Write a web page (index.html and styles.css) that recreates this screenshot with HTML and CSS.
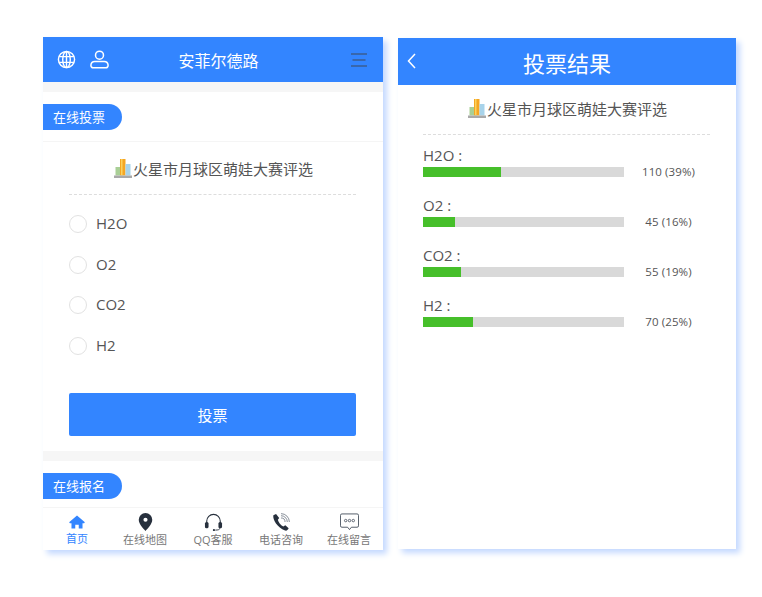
FILE: index.html
```html
<!DOCTYPE html>
<html lang="zh-CN">
<head>
    <meta charset="UTF-8">
    <meta name="viewport" content="width=device-width, initial-scale=1.0">
    <title>在线投票</title>
    <link rel="stylesheet" href="styles.css">
</head>
<body>
    <svg class="svg-defs" width="0" height="0">
        <symbol id="chart" viewBox="0 0 18 19">
            <rect x="1.5" y="8" width="5" height="8.5" fill="#a9cf96"/>
            <rect x="6" y="0" width="5.5" height="16.5" fill="#f5a623"/>
            <rect x="7" y="0" width="1.5" height="16.5" fill="#fbd25e"/>
            <rect x="11.5" y="5" width="5" height="11.5" fill="#a8d3ea"/>
            <rect x="0" y="16.5" width="18" height="2.5" fill="#a9a9a9"/>
        </symbol>
    </svg>

    <div class="phone phone-vote">
        <header class="top-bar">
            <svg class="icon-globe" viewBox="0 0 20 20" width="19" height="19" fill="none" stroke="#fff" stroke-width="1.5">
                <circle cx="10" cy="10" r="8.5"/>
                <ellipse cx="10" cy="10" rx="4" ry="8.5"/>
                <path d="M10 1.500v17M2.200 7h15.600M2.200 13h15.600"/>
            </svg>
            <svg class="icon-user" viewBox="0 0 20 20" width="19" height="19" fill="none" stroke="#fff" stroke-width="1.6">
                <circle cx="10" cy="5.500" r="4.200"/>
                <path d="M5 12h10a4 4 0 0 1 4 3.500v1a2.200 2.200 0 0 1-2.200 2.200H3.200A2.200 2.200 0 0 1 1 16.500v-1A4 4 0 0 1 5 12z"/>
            </svg>
            <h1 class="site-name">安菲尔德路</h1>
            <svg class="icon-menu" viewBox="0 0 16 14" width="16" height="14" fill="none" stroke="#3f4a5c" stroke-width="1.100">
                <path d="M0 1h16M1.500 7h13M0 13h16"/>
            </svg>
        </header>

        <div class="band"></div>
        <div class="section-head"><span class="pill">在线投票</span></div>

        <section class="vote-form">
            <div class="poll-title"><svg class="chart-icon"><use href="#chart"/></svg>火星市月球区萌娃大赛评选</div>
            <ul class="options">
                <li><span class="radio"></span><span class="option-label">H2O</span></li>
                <li><span class="radio"></span><span class="option-label">O2</span></li>
                <li><span class="radio"></span><span class="option-label">CO2</span></li>
                <li><span class="radio"></span><span class="option-label">H2</span></li>
            </ul>
            <button class="vote-button">投票</button>
        </section>

        <div class="band"></div>
        <div class="section-head section-head-last"><span class="pill">在线报名</span></div>

        <nav class="tab-bar">
            <a class="tab tab-active">
                <span class="tab-icon">
                    <svg viewBox="0 0 18 16" width="16" height="14" fill="#3385ff">
                        <path d="M9 .5 18 8.400l-.9 1H15.300V15.500h-4.300v-4.500H7v4.500H2.700V9.400H.9l-.9-1z"/>
                    </svg>
                </span>
                首页
            </a>
            <a class="tab">
                <span class="tab-icon">
                    <svg viewBox="0 0 16 20" width="15" height="18">
                        <path fill="#27303d" fill-rule="evenodd" d="M8 0a7.500 7.500 0 0 1 7.500 7.500C15.500 12.500 10 17.500 8 20 6 17.500.5 12.500.5 7.500A7.500 7.500 0 0 1 8 0zm0 5.200a2.300 2.300 0 1 0 0 4.600 2.300 2.300 0 0 0 0-4.600z"/>
                    </svg>
                </span>
                在线地图
            </a>
            <a class="tab">
                <span class="tab-icon">
                    <svg viewBox="0 0 20 20" width="19" height="18" fill="none">
                        <path d="M2.500 11V9a7.500 7.500 0 0 1 15 0v2" stroke="#27303d" stroke-width="1.200"/>
                        <rect x=".5" y="10" width="4" height="7" rx="1.800" fill="#27303d"/>
                        <rect x="15.500" y="10" width="4" height="7" rx="1.800" fill="#27303d"/>
                        <path d="M17 17c0 1.500-2 2-5 2" stroke="#27303d"/>
                        <circle cx="10.500" cy="19" r="1.200" fill="#27303d"/>
                    </svg>
                </span>
                QQ客服
            </a>
            <a class="tab">
                <span class="tab-icon">
                    <svg viewBox="0 0 20 20" width="18" height="18" fill="none">
                        <path fill="#27303d" d="M4.500 1 1.500 2.500C.5 7 6 16.500 14.500 19.500c2 .5 3.500-1 4-2.500l-3.700-3.500-2.300 1.500C9.500 13.500 7 10 6.500 7.500L8 5.500z"/>
                        <path stroke="#5a6472" stroke-width=".8" d="M10 5.500a4.500 4.500 0 0 1 4.500 4.500M10 3a7 7 0 0 1 7 7M10 .7A9.300 9.300 0 0 1 19.300 10"/>
                    </svg>
                </span>
                电话咨询
            </a>
            <a class="tab">
                <span class="tab-icon">
                    <svg viewBox="0 0 20 18" width="19" height="18" fill="none" stroke="#3a4452">
                        <path stroke-width=".9" d="M2 .5h16A1.500 1.500 0 0 1 19.500 2v11a1.500 1.500 0 0 1-1.500 1.500h-6L10 17l-2-2.500H2A1.500 1.500 0 0 1 .5 13V2A1.500 1.500 0 0 1 2 .5z"/>
                        <circle cx="6" cy="7.500" r="1.300" stroke-width=".8"/>
                        <circle cx="10" cy="7.500" r="1.300" stroke-width=".8"/>
                        <circle cx="14" cy="7.500" r="1.300" stroke-width=".8"/>
                    </svg>
                </span>
                在线留言
            </a>
        </nav>
    </div>

    <div class="phone phone-result">
        <header class="result-bar">
            <svg class="icon-back" viewBox="0 0 9 16" width="9" height="16" fill="none" stroke="#fff" stroke-width="1.500">
                <path d="M8 1 1.500 8 8 15"/>
            </svg>
            <h1 class="result-title">投票结果</h1>
        </header>

        <section class="results">
            <div class="poll-title poll-title-result"><svg class="chart-icon"><use href="#chart"/></svg>火星市月球区萌娃大赛评选</div>

            <div class="result-row">
                <div class="result-name">H2O :</div>
                <div class="result-line">
                    <div class="bar"><div class="bar-fill" style="width: 39%"></div></div>
                    <span class="result-count">110 (39%)</span>
                </div>
            </div>
            <div class="result-row">
                <div class="result-name">O2 :</div>
                <div class="result-line">
                    <div class="bar"><div class="bar-fill" style="width: 16%"></div></div>
                    <span class="result-count">45 (16%)</span>
                </div>
            </div>
            <div class="result-row">
                <div class="result-name">CO2 :</div>
                <div class="result-line">
                    <div class="bar"><div class="bar-fill" style="width: 19%"></div></div>
                    <span class="result-count">55 (19%)</span>
                </div>
            </div>
            <div class="result-row">
                <div class="result-name">H2 :</div>
                <div class="result-line">
                    <div class="bar"><div class="bar-fill" style="width: 25%"></div></div>
                    <span class="result-count">70 (25%)</span>
                </div>
            </div>
        </section>
    </div>
</body>
</html>
```

FILE: styles.css
```css
* {
    box-sizing: border-box;
}
html, body {
    height: 100%;
}
body {
    margin: 0;
    padding: 37px 0 0 43px;
    display: flex;
    align-items: flex-start;
    gap: 15px;
    background-color: white;
    color: #555;
    font-family: "Open Sans", "Noto Sans CJK SC", sans-serif;
    overflow: hidden;
}
.svg-defs {
    position: absolute;
}
.phone {
    background-color: white;
    box-shadow: 4px 4px 6px #c4d9ff;
    display: flex;
    flex-direction: column;
}
.phone-vote {
    width: 340px;
    height: 513px;
}
.phone-result {
    width: 338px;
    height: 511px;
    margin-top: 1px;
}

/* header */
.top-bar {
    height: 45px;
    background-color: #3385ff;
    display: flex;
    align-items: center;
    padding: 0 16px 0 14px;
    position: relative;
}
.icon-user {
    margin-left: 14px;
}
.site-name {
    margin: 0;
    flex: 1;
    padding-right: 23px;
    text-align: center;
    color: white;
    font-size: 16px;
    font-weight: normal;
}
.band {
    height: 10px;
    background-color: #f6f6f6;
    flex: none;
}

/* section heading */
.section-head {
    height: 50px;
    padding-top: 12px;
    border-bottom: 1px solid #f5f5f5;
}
.section-head-last {
    height: 47px;
}
.pill {
    display: block;
    width: 79px;
    height: 26px;
    line-height: 26px;
    padding-left: 10px;
    background-color: #3385ff;
    border-radius: 0 13px 13px 0;
    color: white;
    font-size: 13px;
}

/* vote form */
.vote-form {
    height: 309px;
    padding: 0 27px 0 26px;
}
.poll-title {
    height: 53px;
    display: flex;
    align-items: center;
    justify-content: center;
    padding: 1px 0 0 2px;
    border-bottom: 1px dashed #ddd;
    font-size: 15px;
    color: #555;
}
.chart-icon {
    width: 18px;
    height: 19px;
    margin-right: 1px;
}
.options {
    list-style: none;
    margin: 0;
    padding: 9px 0 0;
}
.options li {
    height: 40.500px;
    display: flex;
    align-items: center;
    font-size: 15px;
}
.option-label {
    padding-bottom: 2px;
}
.radio {
    width: 18px;
    height: 18px;
    margin-right: 9px;
    border: 1px solid #e2e2e2;
    border-radius: 50%;
}
.vote-button {
    display: block;
    width: 100%;
    height: 43px;
    margin-top: 27px;
    border: 0;
    border-radius: 2px;
    background-color: #3385ff;
    color: white;
    font-family: inherit;
    font-size: 15px;
}

/* tab bar */
.tab-bar {
    flex: 1;
    display: flex;
    padding-top: 5px;
}
.tab {
    width: 68px;
    display: flex;
    flex-direction: column;
    align-items: center;
    color: #777;
    font-size: 11px;
    line-height: 15px;
}
.tab-icon {
    height: 18px;
    margin-bottom: 1px;
    display: flex;
    align-items: flex-end;
}
.tab-active {
    color: #3385ff;
}
.tab-active .tab-icon {
    height: 16px;
    margin-bottom: 2px;
}

/* result page */
.result-bar {
    height: 47px;
    flex: none;
    background-color: #3385ff;
    display: flex;
    align-items: center;
    justify-content: center;
    position: relative;
}
.icon-back {
    position: absolute;
    left: 9px;
    top: 15px;
}
.result-title {
    margin: 0;
    color: white;
    font-size: 22px;
    font-weight: normal;
}
.results {
    padding: 0 26px 0 25px;
}
.poll-title-result {
    height: 50px;
    padding: 0 0 3px 2px;
}
.result-row {
    height: 50px;
    padding-top: 11px;
}
.result-name {
    font-size: 15px;
    line-height: 18px;
    color: #555;
}
.result-line {
    display: flex;
    align-items: center;
}
.bar {
    flex: none;
    width: 201px;
    height: 10px;
    background-color: #d9d9d9;
}
.bar-fill {
    height: 100%;
    background-color: #46bf2a;
}
.result-count {
    flex: 1;
    padding-left: 3px;
    text-align: center;
    font-size: 11.500px;
    letter-spacing: .1px;
}
```
